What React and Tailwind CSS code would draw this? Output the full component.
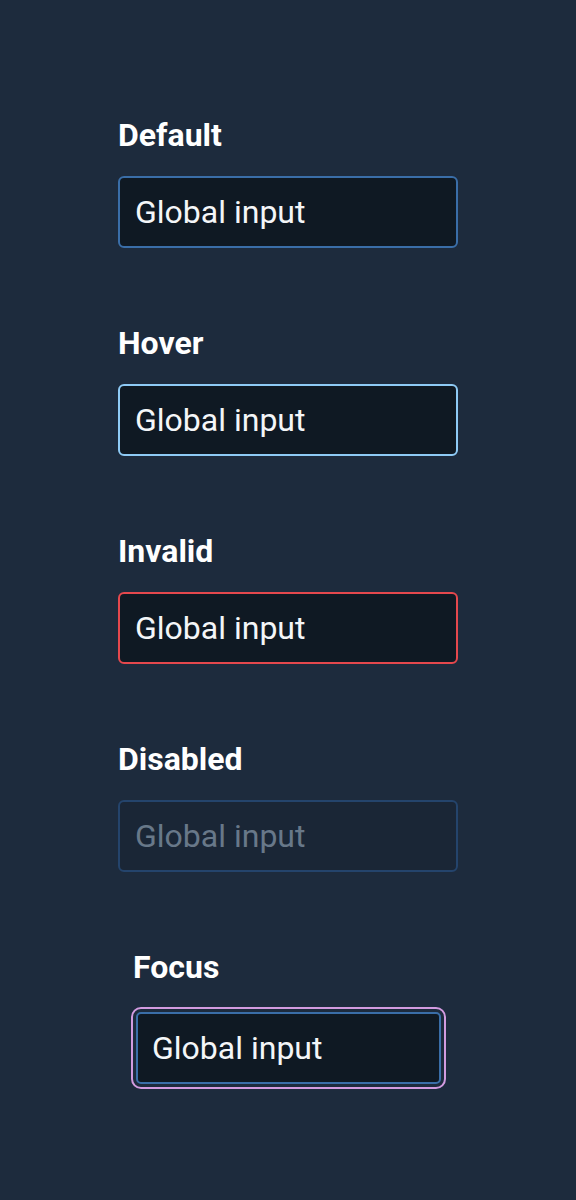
const font = { fontFamily: 'Roboto, "Noto Sans", sans-serif' }

const boxBase =
  'block h-[72px] w-[340px] rounded-[6px] border-2 bg-[#0f1923] px-[15px] text-[32px] text-[#f4f6f8] outline-none'

const Field = ({ label, boxClass, disabled }) => (
  <section className="mb-[79px]">
    <h3 className="mb-[25px] text-[32px] font-bold leading-8 text-white">{label}</h3>
    <input
      readOnly
      disabled={disabled}
      value="Global input"
      className={`${boxBase} ${boxClass}`}
      style={font}
    />
  </section>
)

export default function App() {
  return (
    <div className="min-h-[1200px] bg-[#1d2b3d] pl-[118px] pt-[119px]" style={font}>
      <Field label="Default" boxClass="border-[#3a6ea8]" />
      <Field label="Hover" boxClass="border-[#8ecaf5]" />
      <Field label="Invalid" boxClass="border-[#e5484d]" />
      <Field
        label="Disabled"
        disabled
        boxClass="border-[#24446c] !bg-[#1a2636] !text-[#687889]"
      />

      {/* Focus state, shown with its ring */}
      <section>
        <h3 className="mb-[29px] ml-[15px] text-[32px] font-bold leading-8 text-white">Focus</h3>
        <input
          readOnly
          value="Global input"
          className="ml-[18px] block h-[72px] w-[305px] rounded-[5px] border-2 border-[#3a6ea8] bg-[#0f1923] px-[14px] text-[32px] text-[#f4f6f8] outline-2 outline-offset-[3px] outline-[#d29be0] outline-solid"
          style={font}
        />
      </section>
    </div>
  )
}
